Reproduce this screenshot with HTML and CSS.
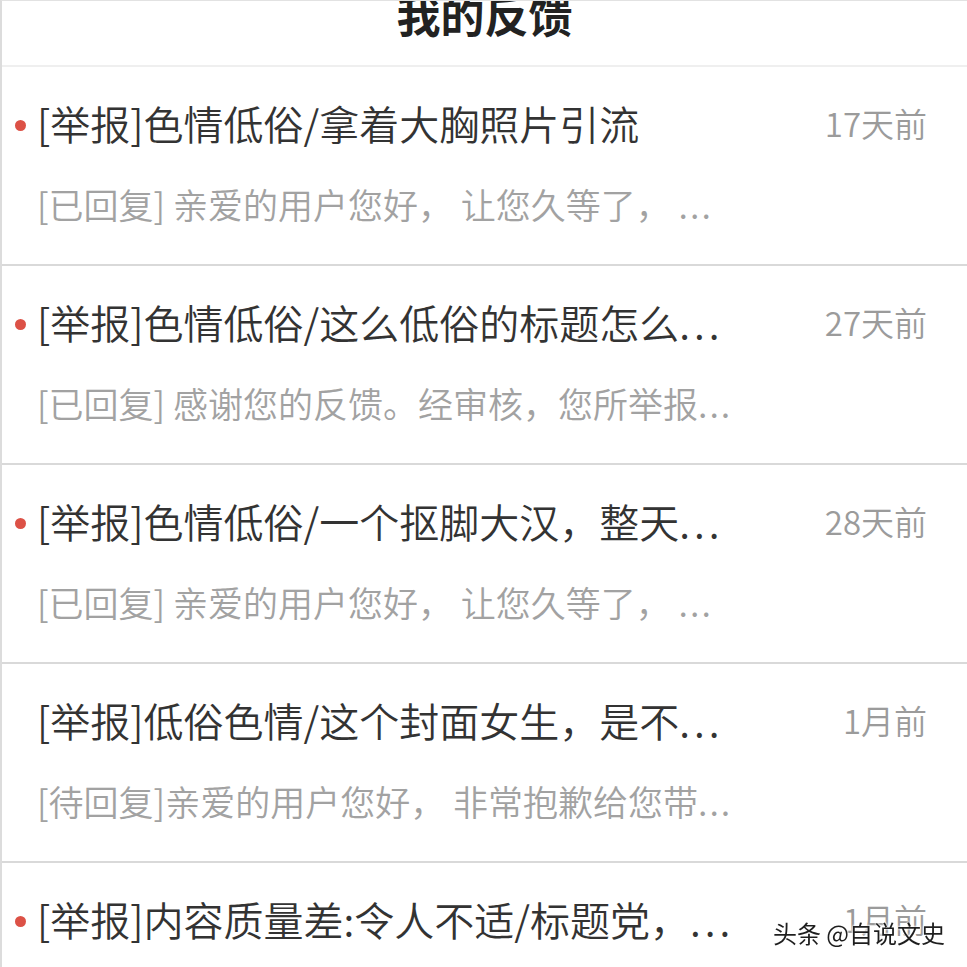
FILE: index.html
```html
<!DOCTYPE html>
<html lang="zh-CN">
<head>
    <meta charset="UTF-8">
    <meta name="viewport" content="width=device-width, initial-scale=1.0">
    <title>我的反馈</title>
    <link rel="stylesheet" href="styles.css">
</head>
<body>
    <div class="page">
        <header class="page-header">
            <h1>我的反馈</h1>
        </header>

        <ul class="feedback-list">
            <li class="feedback-item unread">
                <div class="item-head">
                    <span class="item-title">[举报]色情低俗/拿着大胸照片引流</span>
                    <span class="item-time">17天前</span>
                </div>
                <div class="item-reply">[已回复] 亲爱的用户您好， 让您久等了， <span class="dots">...</span></div>
            </li>
            <li class="feedback-item unread">
                <div class="item-head">
                    <span class="item-title">[举报]色情低俗/这么低俗的标题怎么<span class="dots">...</span></span>
                    <span class="item-time">27天前</span>
                </div>
                <div class="item-reply">[已回复] 感谢您的反馈。经审核，您所举报<span class="dots">...</span></div>
            </li>
            <li class="feedback-item unread">
                <div class="item-head">
                    <span class="item-title">[举报]色情低俗/一个抠脚大汉，整天<span class="dots">...</span></span>
                    <span class="item-time">28天前</span>
                </div>
                <div class="item-reply">[已回复] 亲爱的用户您好， 让您久等了， <span class="dots">...</span></div>
            </li>
            <li class="feedback-item">
                <div class="item-head">
                    <span class="item-title">[举报]低俗色情/这个封面女生，是不<span class="dots">...</span></span>
                    <span class="item-time">1月前</span>
                </div>
                <div class="item-reply">[待回复]亲爱的用户您好， 非常抱歉给您带<span class="dots">...</span></div>
            </li>
            <li class="feedback-item unread">
                <div class="item-head">
                    <span class="item-title">[举报]内容质量差:令人不适/标题党，<span class="dots">...</span></span>
                    <span class="item-time">1月前</span>
                </div>
                <div class="item-reply">[待回复]亲爱的用户您好， 非常抱歉给您带<span class="dots">...</span></div>
            </li>
        </ul>
    </div>

    <div class="watermark">头条 @自说文史</div>
</body>
</html>
```

FILE: styles.css
```css
:root {
    --text-color: #333333;
    --muted-color: #9b9b9b;
    --line-color: #d9d9d9;
    --dot-color: #dc5146;
}

html, body {
    height: 100%;
}

body {
    margin: 0;
    overflow: hidden;
    background: #ffffff;
    font-family: "Noto Sans CJK SC", "Noto Sans", sans-serif;
    color: var(--text-color);
}

.page {
    min-height: 100%;
    border-left: 2px solid #dcdcdc;
    border-top: 1px solid #e2e2e2;
}

/* Header */
.page-header {
    height: 66px;
    box-sizing: border-box;
    border-bottom: 2px solid #efefef;
    overflow: hidden;
}

.page-header h1 {
    margin: -9px 0 0;
    font-size: 44px;
    line-height: 44px;
    font-weight: 700;
    text-align: center;
    color: #222222;
}

/* List */
.feedback-list {
    list-style: none;
    margin: 0;
    padding: 0;
}

.feedback-item {
    height: 199px;
    box-sizing: border-box;
    padding: 36px 40px 0 35px;
    border-bottom: 2px solid var(--line-color);
}

.item-head {
    display: flex;
    align-items: center;
    justify-content: space-between;
    height: 40px;
}

.item-title {
    position: relative;
    font-size: 40px;
    line-height: 40px;
    font-weight: 350;
    white-space: nowrap;
}

.unread .item-title::before {
    content: "";
    position: absolute;
    left: -22px;
    top: 17px;
    width: 11px;
    height: 11px;
    border-radius: 50%;
    background: var(--dot-color);
}

.item-time {
    font-size: 33px;
    line-height: 33px;
    font-weight: 350;
    color: var(--muted-color);
    white-space: nowrap;
}

.item-reply {
    margin-top: 43px;
    font-size: 35px;
    line-height: 35px;
    font-weight: 350;
    color: #a2a2a2;
    white-space: nowrap;
}

.item-title .dots {
    letter-spacing: 4px;
}

.item-reply .dots {
    letter-spacing: 2px;
}

/* Watermark */
.watermark {
    position: fixed;
    right: 22px;
    bottom: 20px;
    font-size: 24px;
    line-height: 28px;
    color: #1e1e1e;
    text-shadow: 0 0 2px #ffffff, 0 0 2px #ffffff, 0 0 3px #ffffff;
}
```
